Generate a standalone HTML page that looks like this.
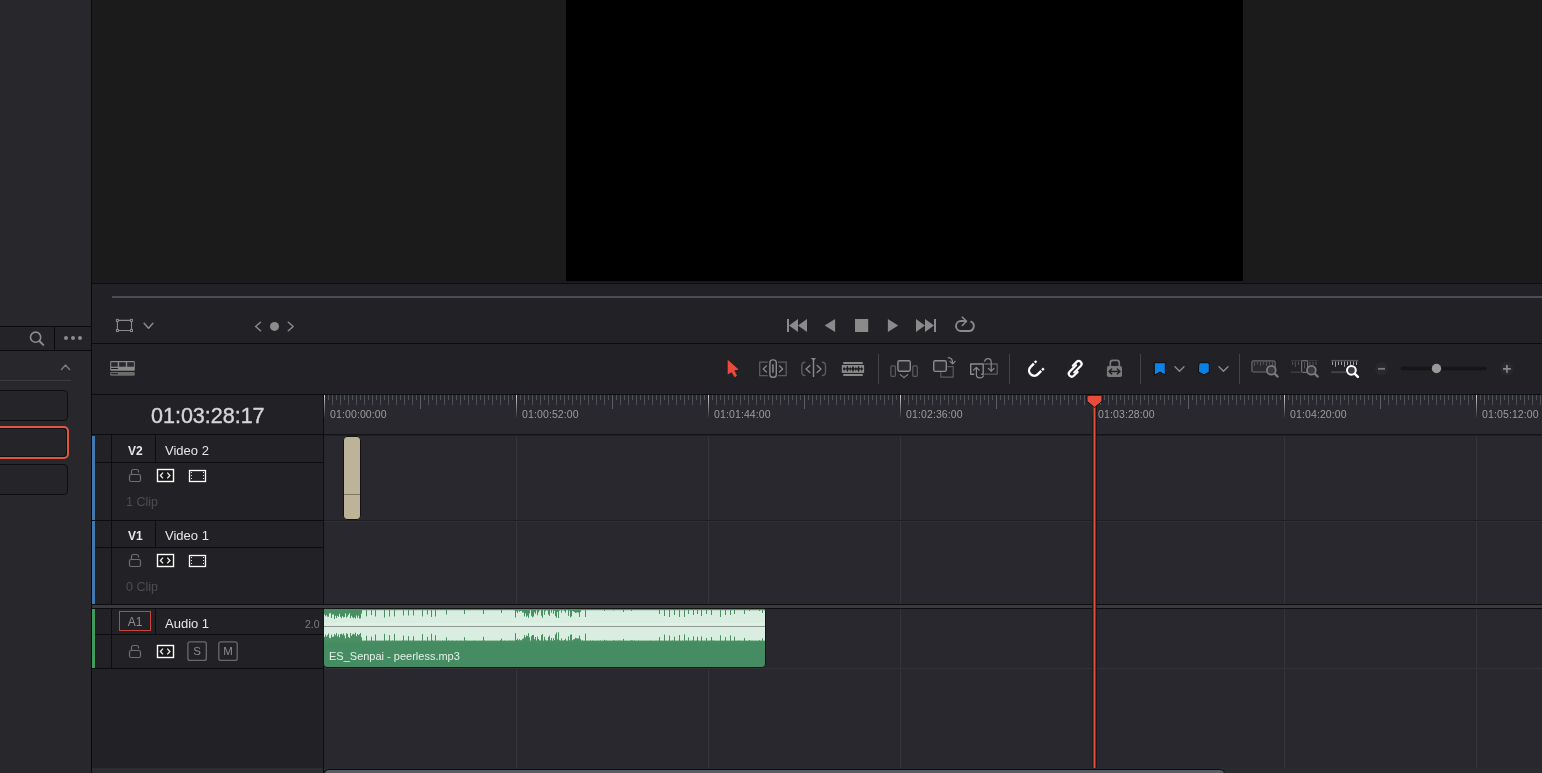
<!DOCTYPE html>
<html><head><meta charset="utf-8">
<style>
*{margin:0;padding:0;box-sizing:border-box}
html,body{width:1542px;height:773px;overflow:hidden;background:#28282e;font-family:"Liberation Sans",sans-serif}
body>div,body>svg{will-change:transform}
.a{position:absolute}
.tn{position:absolute;font-size:12px;font-weight:bold;color:#e6e6e6}
.tt{position:absolute;font-size:13px;color:#e6e6e6}
.tc{position:absolute;font-size:12.5px;color:#4e4e50}
.rl{font-family:"Liberation Sans",sans-serif;font-size:10.5px;letter-spacing:0.12px;fill:#9d9d9f}
</style></head><body>
<!-- left panel -->
<div class="a" style="left:0;top:0;width:91px;height:773px;background:#28272c"></div>
<div class="a" style="left:91px;top:0;width:1px;height:773px;background:#0b0b0c"></div>
<!-- viewer -->
<div class="a" style="left:92px;top:0;width:1450px;height:283px;background:#1b1b1b"></div>
<div class="a" style="left:566px;top:0;width:677px;height:281px;background:#000"></div>
<div class="a" style="left:92px;top:283px;width:1450px;height:1px;background:#0d0d0f"></div>
<!-- transport -->
<div class="a" style="left:92px;top:284px;width:1450px;height:59px;background:#222226"></div>
<div class="a" style="left:112px;top:296px;width:1430px;height:2px;background:#4a4c53"></div>
<div class="a" style="left:92px;top:343px;width:1450px;height:1px;background:#0d0d0f"></div>
<!-- timeline toolbar -->
<div class="a" style="left:92px;top:344px;width:1450px;height:50px;background:#222226"></div>
<div class="a" style="left:92px;top:394px;width:1450px;height:1px;background:#0d0d0f"></div>
<!-- timecode -->
<div class="a" style="left:92px;top:395px;width:231px;height:39px;background:#222226"></div>
<div class="a" style="left:92px;top:434px;width:231px;height:1px;background:#0d0d0f"></div>
<div class="a" style="left:151px;top:404px;font-size:21.5px;letter-spacing:0;-webkit-text-stroke:0.4px #d6d6d6;color:#d6d6d6;white-space:nowrap">01:03:28:17</div>
<!-- header panel -->
<div class="a" style="left:92px;top:435px;width:231px;height:338px;background:#222226"></div>
<div class="a" style="left:323px;top:395px;width:1px;height:378px;background:#0d0d0f"></div>

<!-- track headers -->
<div class="a" style="left:92px;top:436px;width:3px;height:84px;background:#4078b0"></div>
<div class="a" style="left:92px;top:521px;width:3px;height:83px;background:#4078b0"></div>
<div class="a" style="left:92px;top:609px;width:3px;height:59px;background:#3f9a5c"></div>
<div class="a" style="left:111px;top:435px;width:1px;height:233px;background:#0d0d0f"></div>
<div class="a" style="left:155px;top:435px;width:1px;height:27px;background:#0d0d0f"></div>
<div class="a" style="left:155px;top:520px;width:1px;height:27px;background:#0d0d0f"></div>
<div class="a" style="left:155px;top:608px;width:1px;height:26px;background:#0d0d0f"></div>
<div class="a" style="left:95px;top:462px;width:228px;height:1px;background:#0d0d0f"></div>
<div class="a" style="left:92px;top:520px;width:231px;height:1px;background:#0d0d0f"></div>
<div class="a" style="left:95px;top:547px;width:228px;height:1px;background:#0d0d0f"></div>
<div class="a" style="left:95px;top:634px;width:228px;height:1px;background:#0d0d0f"></div>
<div class="a" style="left:92px;top:668px;width:231px;height:1px;background:#0d0d0f"></div>
<div class="tn" style="left:128px;top:444px">V2</div>
<div class="tt" style="left:165px;top:443px">Video 2</div>
<div class="tc" style="left:126px;top:495px">1 Clip</div>
<div class="tn" style="left:128px;top:529px">V1</div>
<div class="tt" style="left:165px;top:528px">Video 1</div>
<div class="tc" style="left:126px;top:580px">0 Clip</div>
<div class="a" style="left:119px;top:611px;width:32px;height:20px;border:1px solid #c8443a;color:#8d8d8f;font-size:12px;text-align:center;line-height:20px">A1</div>
<div class="tt" style="left:165px;top:616px">Audio 1</div>
<div class="a" style="left:304.5px;top:618px;font-size:10.5px;color:#7b7b7d">2.0</div>

<!-- svg overlay for timeline -->
<svg class="a" style="left:0;top:0" width="1542" height="773">
<defs><linearGradient id="mg" x1="0" y1="0" x2="0" y2="1"><stop offset="0" stop-color="#cfcfd2"/><stop offset="1" stop-color="#cfcfd2" stop-opacity="0"/></linearGradient></defs>
<rect x="328" y="395" width="1" height="5" fill="#4b5056"/>
<rect x="332" y="395" width="1" height="10" fill="#4b5056"/>
<rect x="336" y="395" width="1" height="5" fill="#4b5056"/>
<rect x="340" y="395" width="1" height="10" fill="#4b5056"/>
<rect x="344" y="395" width="1" height="5" fill="#4b5056"/>
<rect x="348" y="395" width="1" height="10" fill="#4b5056"/>
<rect x="352" y="395" width="1" height="5" fill="#4b5056"/>
<rect x="356" y="395" width="1" height="10" fill="#4b5056"/>
<rect x="360" y="395" width="1" height="5" fill="#4b5056"/>
<rect x="364" y="395" width="1" height="10" fill="#4b5056"/>
<rect x="368" y="395" width="1" height="5" fill="#4b5056"/>
<rect x="372" y="395" width="1" height="10" fill="#4b5056"/>
<rect x="376" y="395" width="1" height="5" fill="#4b5056"/>
<rect x="380" y="395" width="1" height="10" fill="#4b5056"/>
<rect x="384" y="395" width="1" height="5" fill="#4b5056"/>
<rect x="388" y="395" width="1" height="10" fill="#4b5056"/>
<rect x="392" y="395" width="1" height="5" fill="#4b5056"/>
<rect x="396" y="395" width="1" height="10" fill="#4b5056"/>
<rect x="400" y="395" width="1" height="5" fill="#4b5056"/>
<rect x="404" y="395" width="1" height="10" fill="#4b5056"/>
<rect x="408" y="395" width="1" height="5" fill="#4b5056"/>
<rect x="412" y="395" width="1" height="10" fill="#4b5056"/>
<rect x="416" y="395" width="1" height="5" fill="#4b5056"/>
<rect x="420" y="395" width="1" height="14" fill="#5a5f66"/>
<rect x="424" y="395" width="1" height="5" fill="#4b5056"/>
<rect x="428" y="395" width="1" height="10" fill="#4b5056"/>
<rect x="432" y="395" width="1" height="5" fill="#4b5056"/>
<rect x="436" y="395" width="1" height="10" fill="#4b5056"/>
<rect x="440" y="395" width="1" height="5" fill="#4b5056"/>
<rect x="444" y="395" width="1" height="10" fill="#4b5056"/>
<rect x="448" y="395" width="1" height="5" fill="#4b5056"/>
<rect x="452" y="395" width="1" height="10" fill="#4b5056"/>
<rect x="456" y="395" width="1" height="5" fill="#4b5056"/>
<rect x="460" y="395" width="1" height="10" fill="#4b5056"/>
<rect x="464" y="395" width="1" height="5" fill="#4b5056"/>
<rect x="468" y="395" width="1" height="10" fill="#4b5056"/>
<rect x="472" y="395" width="1" height="5" fill="#4b5056"/>
<rect x="476" y="395" width="1" height="10" fill="#4b5056"/>
<rect x="480" y="395" width="1" height="5" fill="#4b5056"/>
<rect x="484" y="395" width="1" height="10" fill="#4b5056"/>
<rect x="488" y="395" width="1" height="5" fill="#4b5056"/>
<rect x="492" y="395" width="1" height="10" fill="#4b5056"/>
<rect x="496" y="395" width="1" height="5" fill="#4b5056"/>
<rect x="500" y="395" width="1" height="10" fill="#4b5056"/>
<rect x="504" y="395" width="1" height="5" fill="#4b5056"/>
<rect x="508" y="395" width="1" height="10" fill="#4b5056"/>
<rect x="512" y="395" width="1" height="5" fill="#4b5056"/>
<rect x="520" y="395" width="1" height="5" fill="#4b5056"/>
<rect x="524" y="395" width="1" height="10" fill="#4b5056"/>
<rect x="528" y="395" width="1" height="5" fill="#4b5056"/>
<rect x="532" y="395" width="1" height="10" fill="#4b5056"/>
<rect x="536" y="395" width="1" height="5" fill="#4b5056"/>
<rect x="540" y="395" width="1" height="10" fill="#4b5056"/>
<rect x="544" y="395" width="1" height="5" fill="#4b5056"/>
<rect x="548" y="395" width="1" height="10" fill="#4b5056"/>
<rect x="552" y="395" width="1" height="5" fill="#4b5056"/>
<rect x="556" y="395" width="1" height="10" fill="#4b5056"/>
<rect x="560" y="395" width="1" height="5" fill="#4b5056"/>
<rect x="564" y="395" width="1" height="10" fill="#4b5056"/>
<rect x="568" y="395" width="1" height="5" fill="#4b5056"/>
<rect x="572" y="395" width="1" height="10" fill="#4b5056"/>
<rect x="576" y="395" width="1" height="5" fill="#4b5056"/>
<rect x="580" y="395" width="1" height="10" fill="#4b5056"/>
<rect x="584" y="395" width="1" height="5" fill="#4b5056"/>
<rect x="588" y="395" width="1" height="10" fill="#4b5056"/>
<rect x="592" y="395" width="1" height="5" fill="#4b5056"/>
<rect x="596" y="395" width="1" height="10" fill="#4b5056"/>
<rect x="600" y="395" width="1" height="5" fill="#4b5056"/>
<rect x="604" y="395" width="1" height="10" fill="#4b5056"/>
<rect x="608" y="395" width="1" height="5" fill="#4b5056"/>
<rect x="612" y="395" width="1" height="14" fill="#5a5f66"/>
<rect x="616" y="395" width="1" height="5" fill="#4b5056"/>
<rect x="620" y="395" width="1" height="10" fill="#4b5056"/>
<rect x="624" y="395" width="1" height="5" fill="#4b5056"/>
<rect x="628" y="395" width="1" height="10" fill="#4b5056"/>
<rect x="632" y="395" width="1" height="5" fill="#4b5056"/>
<rect x="636" y="395" width="1" height="10" fill="#4b5056"/>
<rect x="640" y="395" width="1" height="5" fill="#4b5056"/>
<rect x="644" y="395" width="1" height="10" fill="#4b5056"/>
<rect x="648" y="395" width="1" height="5" fill="#4b5056"/>
<rect x="652" y="395" width="1" height="10" fill="#4b5056"/>
<rect x="656" y="395" width="1" height="5" fill="#4b5056"/>
<rect x="660" y="395" width="1" height="10" fill="#4b5056"/>
<rect x="664" y="395" width="1" height="5" fill="#4b5056"/>
<rect x="668" y="395" width="1" height="10" fill="#4b5056"/>
<rect x="672" y="395" width="1" height="5" fill="#4b5056"/>
<rect x="676" y="395" width="1" height="10" fill="#4b5056"/>
<rect x="680" y="395" width="1" height="5" fill="#4b5056"/>
<rect x="684" y="395" width="1" height="10" fill="#4b5056"/>
<rect x="688" y="395" width="1" height="5" fill="#4b5056"/>
<rect x="692" y="395" width="1" height="10" fill="#4b5056"/>
<rect x="696" y="395" width="1" height="5" fill="#4b5056"/>
<rect x="700" y="395" width="1" height="10" fill="#4b5056"/>
<rect x="704" y="395" width="1" height="5" fill="#4b5056"/>
<rect x="712" y="395" width="1" height="5" fill="#4b5056"/>
<rect x="716" y="395" width="1" height="10" fill="#4b5056"/>
<rect x="720" y="395" width="1" height="5" fill="#4b5056"/>
<rect x="724" y="395" width="1" height="10" fill="#4b5056"/>
<rect x="728" y="395" width="1" height="5" fill="#4b5056"/>
<rect x="732" y="395" width="1" height="10" fill="#4b5056"/>
<rect x="736" y="395" width="1" height="5" fill="#4b5056"/>
<rect x="740" y="395" width="1" height="10" fill="#4b5056"/>
<rect x="744" y="395" width="1" height="5" fill="#4b5056"/>
<rect x="748" y="395" width="1" height="10" fill="#4b5056"/>
<rect x="752" y="395" width="1" height="5" fill="#4b5056"/>
<rect x="756" y="395" width="1" height="10" fill="#4b5056"/>
<rect x="760" y="395" width="1" height="5" fill="#4b5056"/>
<rect x="764" y="395" width="1" height="10" fill="#4b5056"/>
<rect x="768" y="395" width="1" height="5" fill="#4b5056"/>
<rect x="772" y="395" width="1" height="10" fill="#4b5056"/>
<rect x="776" y="395" width="1" height="5" fill="#4b5056"/>
<rect x="780" y="395" width="1" height="10" fill="#4b5056"/>
<rect x="784" y="395" width="1" height="5" fill="#4b5056"/>
<rect x="788" y="395" width="1" height="10" fill="#4b5056"/>
<rect x="792" y="395" width="1" height="5" fill="#4b5056"/>
<rect x="796" y="395" width="1" height="10" fill="#4b5056"/>
<rect x="800" y="395" width="1" height="5" fill="#4b5056"/>
<rect x="804" y="395" width="1" height="14" fill="#5a5f66"/>
<rect x="808" y="395" width="1" height="5" fill="#4b5056"/>
<rect x="812" y="395" width="1" height="10" fill="#4b5056"/>
<rect x="816" y="395" width="1" height="5" fill="#4b5056"/>
<rect x="820" y="395" width="1" height="10" fill="#4b5056"/>
<rect x="824" y="395" width="1" height="5" fill="#4b5056"/>
<rect x="828" y="395" width="1" height="10" fill="#4b5056"/>
<rect x="832" y="395" width="1" height="5" fill="#4b5056"/>
<rect x="836" y="395" width="1" height="10" fill="#4b5056"/>
<rect x="840" y="395" width="1" height="5" fill="#4b5056"/>
<rect x="844" y="395" width="1" height="10" fill="#4b5056"/>
<rect x="848" y="395" width="1" height="5" fill="#4b5056"/>
<rect x="852" y="395" width="1" height="10" fill="#4b5056"/>
<rect x="856" y="395" width="1" height="5" fill="#4b5056"/>
<rect x="860" y="395" width="1" height="10" fill="#4b5056"/>
<rect x="864" y="395" width="1" height="5" fill="#4b5056"/>
<rect x="868" y="395" width="1" height="10" fill="#4b5056"/>
<rect x="872" y="395" width="1" height="5" fill="#4b5056"/>
<rect x="876" y="395" width="1" height="10" fill="#4b5056"/>
<rect x="880" y="395" width="1" height="5" fill="#4b5056"/>
<rect x="884" y="395" width="1" height="10" fill="#4b5056"/>
<rect x="888" y="395" width="1" height="5" fill="#4b5056"/>
<rect x="892" y="395" width="1" height="10" fill="#4b5056"/>
<rect x="896" y="395" width="1" height="5" fill="#4b5056"/>
<rect x="904" y="395" width="1" height="5" fill="#4b5056"/>
<rect x="908" y="395" width="1" height="10" fill="#4b5056"/>
<rect x="912" y="395" width="1" height="5" fill="#4b5056"/>
<rect x="916" y="395" width="1" height="10" fill="#4b5056"/>
<rect x="920" y="395" width="1" height="5" fill="#4b5056"/>
<rect x="924" y="395" width="1" height="10" fill="#4b5056"/>
<rect x="928" y="395" width="1" height="5" fill="#4b5056"/>
<rect x="932" y="395" width="1" height="10" fill="#4b5056"/>
<rect x="936" y="395" width="1" height="5" fill="#4b5056"/>
<rect x="940" y="395" width="1" height="10" fill="#4b5056"/>
<rect x="944" y="395" width="1" height="5" fill="#4b5056"/>
<rect x="948" y="395" width="1" height="10" fill="#4b5056"/>
<rect x="952" y="395" width="1" height="5" fill="#4b5056"/>
<rect x="956" y="395" width="1" height="10" fill="#4b5056"/>
<rect x="960" y="395" width="1" height="5" fill="#4b5056"/>
<rect x="964" y="395" width="1" height="10" fill="#4b5056"/>
<rect x="968" y="395" width="1" height="5" fill="#4b5056"/>
<rect x="972" y="395" width="1" height="10" fill="#4b5056"/>
<rect x="976" y="395" width="1" height="5" fill="#4b5056"/>
<rect x="980" y="395" width="1" height="10" fill="#4b5056"/>
<rect x="984" y="395" width="1" height="5" fill="#4b5056"/>
<rect x="988" y="395" width="1" height="10" fill="#4b5056"/>
<rect x="992" y="395" width="1" height="5" fill="#4b5056"/>
<rect x="996" y="395" width="1" height="14" fill="#5a5f66"/>
<rect x="1000" y="395" width="1" height="5" fill="#4b5056"/>
<rect x="1004" y="395" width="1" height="10" fill="#4b5056"/>
<rect x="1008" y="395" width="1" height="5" fill="#4b5056"/>
<rect x="1012" y="395" width="1" height="10" fill="#4b5056"/>
<rect x="1016" y="395" width="1" height="5" fill="#4b5056"/>
<rect x="1020" y="395" width="1" height="10" fill="#4b5056"/>
<rect x="1024" y="395" width="1" height="5" fill="#4b5056"/>
<rect x="1028" y="395" width="1" height="10" fill="#4b5056"/>
<rect x="1032" y="395" width="1" height="5" fill="#4b5056"/>
<rect x="1036" y="395" width="1" height="10" fill="#4b5056"/>
<rect x="1040" y="395" width="1" height="5" fill="#4b5056"/>
<rect x="1044" y="395" width="1" height="10" fill="#4b5056"/>
<rect x="1048" y="395" width="1" height="5" fill="#4b5056"/>
<rect x="1052" y="395" width="1" height="10" fill="#4b5056"/>
<rect x="1056" y="395" width="1" height="5" fill="#4b5056"/>
<rect x="1060" y="395" width="1" height="10" fill="#4b5056"/>
<rect x="1064" y="395" width="1" height="5" fill="#4b5056"/>
<rect x="1068" y="395" width="1" height="10" fill="#4b5056"/>
<rect x="1072" y="395" width="1" height="5" fill="#4b5056"/>
<rect x="1076" y="395" width="1" height="10" fill="#4b5056"/>
<rect x="1080" y="395" width="1" height="5" fill="#4b5056"/>
<rect x="1084" y="395" width="1" height="10" fill="#4b5056"/>
<rect x="1088" y="395" width="1" height="5" fill="#4b5056"/>
<rect x="1096" y="395" width="1" height="5" fill="#4b5056"/>
<rect x="1100" y="395" width="1" height="10" fill="#4b5056"/>
<rect x="1104" y="395" width="1" height="5" fill="#4b5056"/>
<rect x="1108" y="395" width="1" height="10" fill="#4b5056"/>
<rect x="1112" y="395" width="1" height="5" fill="#4b5056"/>
<rect x="1116" y="395" width="1" height="10" fill="#4b5056"/>
<rect x="1120" y="395" width="1" height="5" fill="#4b5056"/>
<rect x="1124" y="395" width="1" height="10" fill="#4b5056"/>
<rect x="1128" y="395" width="1" height="5" fill="#4b5056"/>
<rect x="1132" y="395" width="1" height="10" fill="#4b5056"/>
<rect x="1136" y="395" width="1" height="5" fill="#4b5056"/>
<rect x="1140" y="395" width="1" height="10" fill="#4b5056"/>
<rect x="1144" y="395" width="1" height="5" fill="#4b5056"/>
<rect x="1148" y="395" width="1" height="10" fill="#4b5056"/>
<rect x="1152" y="395" width="1" height="5" fill="#4b5056"/>
<rect x="1156" y="395" width="1" height="10" fill="#4b5056"/>
<rect x="1160" y="395" width="1" height="5" fill="#4b5056"/>
<rect x="1164" y="395" width="1" height="10" fill="#4b5056"/>
<rect x="1168" y="395" width="1" height="5" fill="#4b5056"/>
<rect x="1172" y="395" width="1" height="10" fill="#4b5056"/>
<rect x="1176" y="395" width="1" height="5" fill="#4b5056"/>
<rect x="1180" y="395" width="1" height="10" fill="#4b5056"/>
<rect x="1184" y="395" width="1" height="5" fill="#4b5056"/>
<rect x="1188" y="395" width="1" height="14" fill="#5a5f66"/>
<rect x="1192" y="395" width="1" height="5" fill="#4b5056"/>
<rect x="1196" y="395" width="1" height="10" fill="#4b5056"/>
<rect x="1200" y="395" width="1" height="5" fill="#4b5056"/>
<rect x="1204" y="395" width="1" height="10" fill="#4b5056"/>
<rect x="1208" y="395" width="1" height="5" fill="#4b5056"/>
<rect x="1212" y="395" width="1" height="10" fill="#4b5056"/>
<rect x="1216" y="395" width="1" height="5" fill="#4b5056"/>
<rect x="1220" y="395" width="1" height="10" fill="#4b5056"/>
<rect x="1224" y="395" width="1" height="5" fill="#4b5056"/>
<rect x="1228" y="395" width="1" height="10" fill="#4b5056"/>
<rect x="1232" y="395" width="1" height="5" fill="#4b5056"/>
<rect x="1236" y="395" width="1" height="10" fill="#4b5056"/>
<rect x="1240" y="395" width="1" height="5" fill="#4b5056"/>
<rect x="1244" y="395" width="1" height="10" fill="#4b5056"/>
<rect x="1248" y="395" width="1" height="5" fill="#4b5056"/>
<rect x="1252" y="395" width="1" height="10" fill="#4b5056"/>
<rect x="1256" y="395" width="1" height="5" fill="#4b5056"/>
<rect x="1260" y="395" width="1" height="10" fill="#4b5056"/>
<rect x="1264" y="395" width="1" height="5" fill="#4b5056"/>
<rect x="1268" y="395" width="1" height="10" fill="#4b5056"/>
<rect x="1272" y="395" width="1" height="5" fill="#4b5056"/>
<rect x="1276" y="395" width="1" height="10" fill="#4b5056"/>
<rect x="1280" y="395" width="1" height="5" fill="#4b5056"/>
<rect x="1288" y="395" width="1" height="5" fill="#4b5056"/>
<rect x="1292" y="395" width="1" height="10" fill="#4b5056"/>
<rect x="1296" y="395" width="1" height="5" fill="#4b5056"/>
<rect x="1300" y="395" width="1" height="10" fill="#4b5056"/>
<rect x="1304" y="395" width="1" height="5" fill="#4b5056"/>
<rect x="1308" y="395" width="1" height="10" fill="#4b5056"/>
<rect x="1312" y="395" width="1" height="5" fill="#4b5056"/>
<rect x="1316" y="395" width="1" height="10" fill="#4b5056"/>
<rect x="1320" y="395" width="1" height="5" fill="#4b5056"/>
<rect x="1324" y="395" width="1" height="10" fill="#4b5056"/>
<rect x="1328" y="395" width="1" height="5" fill="#4b5056"/>
<rect x="1332" y="395" width="1" height="10" fill="#4b5056"/>
<rect x="1336" y="395" width="1" height="5" fill="#4b5056"/>
<rect x="1340" y="395" width="1" height="10" fill="#4b5056"/>
<rect x="1344" y="395" width="1" height="5" fill="#4b5056"/>
<rect x="1348" y="395" width="1" height="10" fill="#4b5056"/>
<rect x="1352" y="395" width="1" height="5" fill="#4b5056"/>
<rect x="1356" y="395" width="1" height="10" fill="#4b5056"/>
<rect x="1360" y="395" width="1" height="5" fill="#4b5056"/>
<rect x="1364" y="395" width="1" height="10" fill="#4b5056"/>
<rect x="1368" y="395" width="1" height="5" fill="#4b5056"/>
<rect x="1372" y="395" width="1" height="10" fill="#4b5056"/>
<rect x="1376" y="395" width="1" height="5" fill="#4b5056"/>
<rect x="1380" y="395" width="1" height="14" fill="#5a5f66"/>
<rect x="1384" y="395" width="1" height="5" fill="#4b5056"/>
<rect x="1388" y="395" width="1" height="10" fill="#4b5056"/>
<rect x="1392" y="395" width="1" height="5" fill="#4b5056"/>
<rect x="1396" y="395" width="1" height="10" fill="#4b5056"/>
<rect x="1400" y="395" width="1" height="5" fill="#4b5056"/>
<rect x="1404" y="395" width="1" height="10" fill="#4b5056"/>
<rect x="1408" y="395" width="1" height="5" fill="#4b5056"/>
<rect x="1412" y="395" width="1" height="10" fill="#4b5056"/>
<rect x="1416" y="395" width="1" height="5" fill="#4b5056"/>
<rect x="1420" y="395" width="1" height="10" fill="#4b5056"/>
<rect x="1424" y="395" width="1" height="5" fill="#4b5056"/>
<rect x="1428" y="395" width="1" height="10" fill="#4b5056"/>
<rect x="1432" y="395" width="1" height="5" fill="#4b5056"/>
<rect x="1436" y="395" width="1" height="10" fill="#4b5056"/>
<rect x="1440" y="395" width="1" height="5" fill="#4b5056"/>
<rect x="1444" y="395" width="1" height="10" fill="#4b5056"/>
<rect x="1448" y="395" width="1" height="5" fill="#4b5056"/>
<rect x="1452" y="395" width="1" height="10" fill="#4b5056"/>
<rect x="1456" y="395" width="1" height="5" fill="#4b5056"/>
<rect x="1460" y="395" width="1" height="10" fill="#4b5056"/>
<rect x="1464" y="395" width="1" height="5" fill="#4b5056"/>
<rect x="1468" y="395" width="1" height="10" fill="#4b5056"/>
<rect x="1472" y="395" width="1" height="5" fill="#4b5056"/>
<rect x="1480" y="395" width="1" height="5" fill="#4b5056"/>
<rect x="1484" y="395" width="1" height="10" fill="#4b5056"/>
<rect x="1488" y="395" width="1" height="5" fill="#4b5056"/>
<rect x="1492" y="395" width="1" height="10" fill="#4b5056"/>
<rect x="1496" y="395" width="1" height="5" fill="#4b5056"/>
<rect x="1500" y="395" width="1" height="10" fill="#4b5056"/>
<rect x="1504" y="395" width="1" height="5" fill="#4b5056"/>
<rect x="1508" y="395" width="1" height="10" fill="#4b5056"/>
<rect x="1512" y="395" width="1" height="5" fill="#4b5056"/>
<rect x="1516" y="395" width="1" height="10" fill="#4b5056"/>
<rect x="1520" y="395" width="1" height="5" fill="#4b5056"/>
<rect x="1524" y="395" width="1" height="10" fill="#4b5056"/>
<rect x="1528" y="395" width="1" height="5" fill="#4b5056"/>
<rect x="1532" y="395" width="1" height="10" fill="#4b5056"/>
<rect x="1536" y="395" width="1" height="5" fill="#4b5056"/>
<rect x="1540" y="395" width="1" height="10" fill="#4b5056"/>
<rect x="324" y="395" width="1" height="24" fill="url(#mg)"/>
<text x="330" y="418" class="rl">01:00:00:00</text>
<rect x="516" y="395" width="1" height="24" fill="url(#mg)"/>
<text x="522" y="418" class="rl">01:00:52:00</text>
<rect x="708" y="395" width="1" height="24" fill="url(#mg)"/>
<text x="714" y="418" class="rl">01:01:44:00</text>
<rect x="900" y="395" width="1" height="24" fill="url(#mg)"/>
<text x="906" y="418" class="rl">01:02:36:00</text>
<rect x="1092" y="395" width="1" height="24" fill="url(#mg)"/>
<text x="1098" y="418" class="rl">01:03:28:00</text>
<rect x="1284" y="395" width="1" height="24" fill="url(#mg)"/>
<text x="1290" y="418" class="rl">01:04:20:00</text>
<rect x="1476" y="395" width="1" height="24" fill="url(#mg)"/>
<text x="1482" y="418" class="rl">01:05:12:00</text>
<rect x="516" y="435" width="1" height="334" fill="#34343a"/>
<rect x="708" y="435" width="1" height="334" fill="#34343a"/>
<rect x="900" y="435" width="1" height="334" fill="#34343a"/>
<rect x="1092" y="435" width="1" height="334" fill="#34343a"/>
<rect x="1284" y="435" width="1" height="334" fill="#34343a"/>
<rect x="1476" y="435" width="1" height="334" fill="#34343a"/>
</svg>
<!-- canvas details -->
<div class="a" style="left:92px;top:604px;width:1450px;height:1px;background:#0d0d0f"></div>
<div class="a" style="left:92px;top:605px;width:1450px;height:3px;background:#3a3a3d"></div>
<div class="a" style="left:92px;top:608px;width:1450px;height:1px;background:#0d0d0f"></div>

<div class="a" style="left:324px;top:434px;width:1218px;height:1px;background:#141417"></div>
<div class="a" style="left:324px;top:435px;width:1218px;height:1px;background:#1f1f23"></div>
<div class="a" style="left:324px;top:520px;width:1218px;height:1px;background:#1f1f23"></div>
<div class="a" style="left:324px;top:521px;width:1218px;height:1px;background:#2f2f35"></div>
<div class="a" style="left:324px;top:668px;width:1218px;height:1px;background:#323238"></div>
<!-- bottom strip -->
<div class="a" style="left:92px;top:768px;width:231px;height:5px;background:#2c2d31"></div>
<div class="a" style="left:324px;top:768px;width:1218px;height:5px;background:#2a2b2f"></div>
<div class="a" style="left:324px;top:769px;width:901px;height:6px;background:#5a5d63;border:1px solid #0c0c0e;border-radius:5px 5px 0 0"></div>
<!-- V2 clip -->
<div class="a" style="left:343px;top:436px;width:18px;height:84px;background:#bdb399;border:1px solid #141416;border-radius:4px"></div>
<div class="a" style="left:344px;top:494px;width:16px;height:1px;background:#7d7764"></div>
<!-- audio clip -->
<div class="a" style="left:323px;top:608px;width:443px;height:60px;background:#468c62;border:1px solid #141416;border-radius:4px;overflow:hidden">
  <div class="a" style="left:0;top:0;width:441px;height:33px;background:#d9ede1"></div>
  <div class="a" style="left:0;top:13.5px;width:441px;height:2px;background:#e1f1e7"></div>
  <div class="a" style="left:0;top:17px;width:441px;height:1px;background:#8f9b93"></div>
  <div class="a" style="left:5px;top:41px;font-size:11px;color:#e4efe7;white-space:nowrap">ES_Senpai - peerless.mp3</div>
</div>
<svg class="a" style="left:0;top:0" width="1542" height="773">
<rect x="324" y="609" width="441" height="1.2" fill="#4a8f63"/>
<rect x="324" y="640.6" width="441" height="1.6" fill="#4a8f63"/>
<rect x="324" y="609" width="1" height="5.4" fill="#4a8f63"/>
<rect x="324" y="637.0" width="1" height="5.0" fill="#4a8f63"/>
<rect x="325" y="609" width="1" height="7.3" fill="#4a8f63"/>
<rect x="325" y="634.6" width="1" height="7.4" fill="#4a8f63"/>
<rect x="326" y="609" width="1" height="6.2" fill="#4a8f63"/>
<rect x="326" y="636.6" width="1" height="5.4" fill="#4a8f63"/>
<rect x="327" y="609" width="1" height="7.6" fill="#4a8f63"/>
<rect x="327" y="635.2" width="1" height="6.8" fill="#4a8f63"/>
<rect x="328" y="609" width="1" height="7.8" fill="#4a8f63"/>
<rect x="328" y="633.5" width="1" height="8.5" fill="#4a8f63"/>
<rect x="329" y="609" width="1" height="4.4" fill="#4a8f63"/>
<rect x="329" y="637.8" width="1" height="4.2" fill="#4a8f63"/>
<rect x="330" y="609" width="1" height="4.1" fill="#4a8f63"/>
<rect x="330" y="638.1" width="1" height="3.9" fill="#4a8f63"/>
<rect x="331" y="609" width="1" height="9.0" fill="#4a8f63"/>
<rect x="331" y="634.7" width="1" height="7.3" fill="#4a8f63"/>
<rect x="332" y="609" width="1" height="5.6" fill="#4a8f63"/>
<rect x="332" y="636.9" width="1" height="5.1" fill="#4a8f63"/>
<rect x="333" y="609" width="1" height="5.4" fill="#4a8f63"/>
<rect x="333" y="636.7" width="1" height="5.3" fill="#4a8f63"/>
<rect x="334" y="609" width="1" height="10.0" fill="#4a8f63"/>
<rect x="334" y="634.0" width="1" height="8.0" fill="#4a8f63"/>
<rect x="335" y="609" width="1" height="6.8" fill="#4a8f63"/>
<rect x="335" y="635.3" width="1" height="6.7" fill="#4a8f63"/>
<rect x="336" y="609" width="1" height="9.0" fill="#4a8f63"/>
<rect x="336" y="633.1" width="1" height="8.9" fill="#4a8f63"/>
<rect x="337" y="609" width="1" height="6.9" fill="#4a8f63"/>
<rect x="337" y="636.4" width="1" height="5.6" fill="#4a8f63"/>
<rect x="338" y="609" width="1" height="7.8" fill="#4a8f63"/>
<rect x="338" y="634.3" width="1" height="7.7" fill="#4a8f63"/>
<rect x="339" y="609" width="1" height="4.9" fill="#4a8f63"/>
<rect x="339" y="637.4" width="1" height="4.6" fill="#4a8f63"/>
<rect x="340" y="609" width="1" height="7.8" fill="#4a8f63"/>
<rect x="340" y="634.2" width="1" height="7.8" fill="#4a8f63"/>
<rect x="341" y="609" width="1" height="9.2" fill="#4a8f63"/>
<rect x="341" y="633.7" width="1" height="8.3" fill="#4a8f63"/>
<rect x="342" y="609" width="1" height="7.1" fill="#4a8f63"/>
<rect x="342" y="634.8" width="1" height="7.2" fill="#4a8f63"/>
<rect x="343" y="609" width="1" height="8.4" fill="#4a8f63"/>
<rect x="343" y="633.4" width="1" height="8.6" fill="#4a8f63"/>
<rect x="344" y="609" width="1" height="8.0" fill="#4a8f63"/>
<rect x="344" y="635.5" width="1" height="6.5" fill="#4a8f63"/>
<rect x="345" y="609" width="1" height="4.4" fill="#4a8f63"/>
<rect x="345" y="638.4" width="1" height="3.6" fill="#4a8f63"/>
<rect x="346" y="609" width="1" height="8.5" fill="#4a8f63"/>
<rect x="346" y="633.4" width="1" height="8.6" fill="#4a8f63"/>
<rect x="347" y="609" width="1" height="7.5" fill="#4a8f63"/>
<rect x="347" y="633.8" width="1" height="8.2" fill="#4a8f63"/>
<rect x="348" y="609" width="1" height="5.8" fill="#4a8f63"/>
<rect x="348" y="636.9" width="1" height="5.1" fill="#4a8f63"/>
<rect x="349" y="609" width="1" height="4.2" fill="#4a8f63"/>
<rect x="349" y="638.1" width="1" height="3.9" fill="#4a8f63"/>
<rect x="350" y="609" width="1" height="9.2" fill="#4a8f63"/>
<rect x="350" y="633.0" width="1" height="9.0" fill="#4a8f63"/>
<rect x="351" y="609" width="1" height="6.8" fill="#4a8f63"/>
<rect x="351" y="635.9" width="1" height="6.1" fill="#4a8f63"/>
<rect x="352" y="609" width="1" height="8.3" fill="#4a8f63"/>
<rect x="352" y="634.4" width="1" height="7.6" fill="#4a8f63"/>
<rect x="353" y="609" width="1" height="9.3" fill="#4a8f63"/>
<rect x="353" y="633.7" width="1" height="8.3" fill="#4a8f63"/>
<rect x="354" y="609" width="1" height="8.3" fill="#4a8f63"/>
<rect x="354" y="634.5" width="1" height="7.5" fill="#4a8f63"/>
<rect x="355" y="609" width="1" height="9.5" fill="#4a8f63"/>
<rect x="355" y="632.7" width="1" height="9.3" fill="#4a8f63"/>
<rect x="356" y="609" width="1" height="6.4" fill="#4a8f63"/>
<rect x="356" y="636.3" width="1" height="5.7" fill="#4a8f63"/>
<rect x="357" y="609" width="1" height="8.8" fill="#4a8f63"/>
<rect x="357" y="634.0" width="1" height="8.0" fill="#4a8f63"/>
<rect x="358" y="609" width="1" height="6.7" fill="#4a8f63"/>
<rect x="358" y="635.1" width="1" height="6.9" fill="#4a8f63"/>
<rect x="359" y="609" width="1" height="9.6" fill="#4a8f63"/>
<rect x="359" y="634.2" width="1" height="7.8" fill="#4a8f63"/>
<rect x="360" y="609" width="1" height="9.3" fill="#4a8f63"/>
<rect x="360" y="633.0" width="1" height="9.0" fill="#4a8f63"/>
<rect x="361" y="609" width="1" height="4.6" fill="#4a8f63"/>
<rect x="361" y="637.3" width="1" height="4.7" fill="#4a8f63"/>
<rect x="513" y="609" width="1" height="1.1" fill="#4a8f63"/>
<rect x="513" y="641.0" width="1" height="1.0" fill="#4a8f63"/>
<rect x="514" y="609" width="1" height="1.3" fill="#4a8f63"/>
<rect x="514" y="640.9" width="1" height="1.1" fill="#4a8f63"/>
<rect x="515" y="609" width="1" height="8.4" fill="#4a8f63"/>
<rect x="515" y="633.2" width="1" height="8.8" fill="#4a8f63"/>
<rect x="516" y="609" width="1" height="2.3" fill="#4a8f63"/>
<rect x="516" y="640.0" width="1" height="2.0" fill="#4a8f63"/>
<rect x="517" y="609" width="1" height="3.9" fill="#4a8f63"/>
<rect x="517" y="638.7" width="1" height="3.3" fill="#4a8f63"/>
<rect x="518" y="609" width="1" height="1.6" fill="#4a8f63"/>
<rect x="518" y="640.5" width="1" height="1.5" fill="#4a8f63"/>
<rect x="519" y="609" width="1" height="2.8" fill="#4a8f63"/>
<rect x="519" y="639.2" width="1" height="2.8" fill="#4a8f63"/>
<rect x="520" y="609" width="1" height="2.0" fill="#4a8f63"/>
<rect x="520" y="640.4" width="1" height="1.6" fill="#4a8f63"/>
<rect x="521" y="609" width="1" height="1.8" fill="#4a8f63"/>
<rect x="521" y="640.4" width="1" height="1.6" fill="#4a8f63"/>
<rect x="522" y="609" width="1" height="3.5" fill="#4a8f63"/>
<rect x="522" y="638.9" width="1" height="3.1" fill="#4a8f63"/>
<rect x="523" y="609" width="1" height="3.5" fill="#4a8f63"/>
<rect x="523" y="638.4" width="1" height="3.6" fill="#4a8f63"/>
<rect x="524" y="609" width="1" height="7.4" fill="#4a8f63"/>
<rect x="524" y="635.1" width="1" height="6.9" fill="#4a8f63"/>
<rect x="525" y="609" width="1" height="4.4" fill="#4a8f63"/>
<rect x="525" y="637.3" width="1" height="4.7" fill="#4a8f63"/>
<rect x="526" y="609" width="1" height="7.8" fill="#4a8f63"/>
<rect x="526" y="635.4" width="1" height="6.6" fill="#4a8f63"/>
<rect x="527" y="609" width="1" height="6.7" fill="#4a8f63"/>
<rect x="527" y="636.0" width="1" height="6.0" fill="#4a8f63"/>
<rect x="528" y="609" width="1" height="8.8" fill="#4a8f63"/>
<rect x="528" y="633.2" width="1" height="8.8" fill="#4a8f63"/>
<rect x="529" y="609" width="1" height="4.3" fill="#4a8f63"/>
<rect x="529" y="637.4" width="1" height="4.6" fill="#4a8f63"/>
<rect x="530" y="609" width="1" height="1.1" fill="#4a8f63"/>
<rect x="530" y="640.9" width="1" height="1.1" fill="#4a8f63"/>
<rect x="531" y="609" width="1" height="6.8" fill="#4a8f63"/>
<rect x="531" y="636.1" width="1" height="5.9" fill="#4a8f63"/>
<rect x="532" y="609" width="1" height="8.4" fill="#4a8f63"/>
<rect x="532" y="635.0" width="1" height="7.0" fill="#4a8f63"/>
<rect x="533" y="609" width="1" height="7.4" fill="#4a8f63"/>
<rect x="533" y="634.9" width="1" height="7.1" fill="#4a8f63"/>
<rect x="534" y="609" width="1" height="3.3" fill="#4a8f63"/>
<rect x="534" y="639.2" width="1" height="2.8" fill="#4a8f63"/>
<rect x="535" y="609" width="1" height="4.8" fill="#4a8f63"/>
<rect x="535" y="637.0" width="1" height="5.0" fill="#4a8f63"/>
<rect x="536" y="609" width="1" height="1.3" fill="#4a8f63"/>
<rect x="536" y="640.7" width="1" height="1.3" fill="#4a8f63"/>
<rect x="537" y="609" width="1" height="6.3" fill="#4a8f63"/>
<rect x="537" y="636.6" width="1" height="5.4" fill="#4a8f63"/>
<rect x="538" y="609" width="1" height="3.4" fill="#4a8f63"/>
<rect x="538" y="639.0" width="1" height="3.0" fill="#4a8f63"/>
<rect x="539" y="609" width="1" height="1.5" fill="#4a8f63"/>
<rect x="539" y="640.4" width="1" height="1.6" fill="#4a8f63"/>
<rect x="540" y="609" width="1" height="1.0" fill="#4a8f63"/>
<rect x="540" y="641.0" width="1" height="1.0" fill="#4a8f63"/>
<rect x="541" y="609" width="1" height="6.7" fill="#4a8f63"/>
<rect x="541" y="635.1" width="1" height="6.9" fill="#4a8f63"/>
<rect x="542" y="609" width="1" height="8.8" fill="#4a8f63"/>
<rect x="542" y="634.0" width="1" height="8.0" fill="#4a8f63"/>
<rect x="543" y="609" width="1" height="1.0" fill="#4a8f63"/>
<rect x="543" y="641.1" width="1" height="0.9" fill="#4a8f63"/>
<rect x="544" y="609" width="1" height="5.9" fill="#4a8f63"/>
<rect x="544" y="636.8" width="1" height="5.2" fill="#4a8f63"/>
<rect x="545" y="609" width="1" height="2.1" fill="#4a8f63"/>
<rect x="545" y="639.8" width="1" height="2.2" fill="#4a8f63"/>
<rect x="546" y="609" width="1" height="1.1" fill="#4a8f63"/>
<rect x="546" y="641.0" width="1" height="1.0" fill="#4a8f63"/>
<rect x="547" y="609" width="1" height="1.5" fill="#4a8f63"/>
<rect x="547" y="640.6" width="1" height="1.4" fill="#4a8f63"/>
<rect x="548" y="609" width="1" height="5.5" fill="#4a8f63"/>
<rect x="548" y="636.9" width="1" height="5.1" fill="#4a8f63"/>
<rect x="549" y="609" width="1" height="6.9" fill="#4a8f63"/>
<rect x="549" y="635.6" width="1" height="6.4" fill="#4a8f63"/>
<rect x="550" y="609" width="1" height="1.0" fill="#4a8f63"/>
<rect x="550" y="641.1" width="1" height="0.9" fill="#4a8f63"/>
<rect x="551" y="609" width="1" height="3.7" fill="#4a8f63"/>
<rect x="551" y="638.0" width="1" height="4.0" fill="#4a8f63"/>
<rect x="552" y="609" width="1" height="1.0" fill="#4a8f63"/>
<rect x="552" y="641.1" width="1" height="0.9" fill="#4a8f63"/>
<rect x="553" y="609" width="1" height="4.9" fill="#4a8f63"/>
<rect x="553" y="638.1" width="1" height="3.9" fill="#4a8f63"/>
<rect x="554" y="609" width="1" height="1.7" fill="#4a8f63"/>
<rect x="554" y="640.2" width="1" height="1.8" fill="#4a8f63"/>
<rect x="555" y="609" width="1" height="7.1" fill="#4a8f63"/>
<rect x="555" y="634.5" width="1" height="7.5" fill="#4a8f63"/>
<rect x="556" y="609" width="1" height="8.7" fill="#4a8f63"/>
<rect x="556" y="632.5" width="1" height="9.5" fill="#4a8f63"/>
<rect x="557" y="609" width="1" height="2.8" fill="#4a8f63"/>
<rect x="557" y="639.4" width="1" height="2.6" fill="#4a8f63"/>
<rect x="558" y="609" width="1" height="9.0" fill="#4a8f63"/>
<rect x="558" y="632.3" width="1" height="9.7" fill="#4a8f63"/>
<rect x="559" y="609" width="1" height="1.6" fill="#4a8f63"/>
<rect x="559" y="640.3" width="1" height="1.7" fill="#4a8f63"/>
<rect x="560" y="609" width="1" height="1.0" fill="#4a8f63"/>
<rect x="560" y="641.1" width="1" height="0.9" fill="#4a8f63"/>
<rect x="561" y="609" width="1" height="3.6" fill="#4a8f63"/>
<rect x="561" y="638.3" width="1" height="3.7" fill="#4a8f63"/>
<rect x="562" y="609" width="1" height="1.0" fill="#4a8f63"/>
<rect x="562" y="640.9" width="1" height="1.1" fill="#4a8f63"/>
<rect x="563" y="609" width="1" height="1.2" fill="#4a8f63"/>
<rect x="563" y="640.8" width="1" height="1.2" fill="#4a8f63"/>
<rect x="564" y="609" width="1" height="2.1" fill="#4a8f63"/>
<rect x="564" y="640.0" width="1" height="2.0" fill="#4a8f63"/>
<rect x="565" y="609" width="1" height="3.7" fill="#4a8f63"/>
<rect x="565" y="638.7" width="1" height="3.3" fill="#4a8f63"/>
<rect x="566" y="609" width="1" height="1.1" fill="#4a8f63"/>
<rect x="566" y="641.0" width="1" height="1.0" fill="#4a8f63"/>
<rect x="567" y="609" width="1" height="1.0" fill="#4a8f63"/>
<rect x="567" y="641.1" width="1" height="0.9" fill="#4a8f63"/>
<rect x="568" y="609" width="1" height="6.9" fill="#4a8f63"/>
<rect x="568" y="636.4" width="1" height="5.6" fill="#4a8f63"/>
<rect x="569" y="609" width="1" height="1.6" fill="#4a8f63"/>
<rect x="569" y="640.4" width="1" height="1.6" fill="#4a8f63"/>
<rect x="570" y="609" width="1" height="8.3" fill="#4a8f63"/>
<rect x="570" y="634.7" width="1" height="7.3" fill="#4a8f63"/>
<rect x="571" y="609" width="1" height="7.3" fill="#4a8f63"/>
<rect x="571" y="634.4" width="1" height="7.6" fill="#4a8f63"/>
<rect x="572" y="609" width="1" height="1.9" fill="#4a8f63"/>
<rect x="572" y="640.4" width="1" height="1.6" fill="#4a8f63"/>
<rect x="573" y="609" width="1" height="2.5" fill="#4a8f63"/>
<rect x="573" y="639.4" width="1" height="2.6" fill="#4a8f63"/>
<rect x="574" y="609" width="1" height="2.9" fill="#4a8f63"/>
<rect x="574" y="639.1" width="1" height="2.9" fill="#4a8f63"/>
<rect x="575" y="609" width="1" height="4.0" fill="#4a8f63"/>
<rect x="575" y="637.7" width="1" height="4.3" fill="#4a8f63"/>
<rect x="576" y="609" width="1" height="3.6" fill="#4a8f63"/>
<rect x="576" y="638.2" width="1" height="3.8" fill="#4a8f63"/>
<rect x="577" y="609" width="1" height="3.2" fill="#4a8f63"/>
<rect x="577" y="638.5" width="1" height="3.5" fill="#4a8f63"/>
<rect x="578" y="609" width="1" height="3.8" fill="#4a8f63"/>
<rect x="578" y="638.3" width="1" height="3.7" fill="#4a8f63"/>
<rect x="579" y="609" width="1" height="8.0" fill="#4a8f63"/>
<rect x="579" y="635.6" width="1" height="6.4" fill="#4a8f63"/>
<rect x="580" y="609" width="1" height="2.8" fill="#4a8f63"/>
<rect x="580" y="639.1" width="1" height="2.9" fill="#4a8f63"/>
<rect x="366" y="609" width="1" height="7.3" fill="#4a8f63"/>
<rect x="366" y="635.8" width="1" height="6.2" fill="#4a8f63"/>
<rect x="371" y="609" width="1" height="6.0" fill="#4a8f63"/>
<rect x="371" y="636.7" width="1" height="5.3" fill="#4a8f63"/>
<rect x="375" y="609" width="1" height="7.5" fill="#4a8f63"/>
<rect x="375" y="634.5" width="1" height="7.5" fill="#4a8f63"/>
<rect x="384" y="609" width="1" height="8.5" fill="#4a8f63"/>
<rect x="384" y="633.9" width="1" height="8.1" fill="#4a8f63"/>
<rect x="389" y="609" width="1" height="7.5" fill="#4a8f63"/>
<rect x="389" y="635.1" width="1" height="6.9" fill="#4a8f63"/>
<rect x="394" y="609" width="1" height="7.5" fill="#4a8f63"/>
<rect x="394" y="633.9" width="1" height="8.1" fill="#4a8f63"/>
<rect x="403" y="609" width="1" height="6.5" fill="#4a8f63"/>
<rect x="403" y="635.6" width="1" height="6.4" fill="#4a8f63"/>
<rect x="408" y="609" width="1" height="6.5" fill="#4a8f63"/>
<rect x="408" y="636.1" width="1" height="5.9" fill="#4a8f63"/>
<rect x="413" y="609" width="1" height="6.5" fill="#4a8f63"/>
<rect x="413" y="636.3" width="1" height="5.7" fill="#4a8f63"/>
<rect x="422" y="609" width="1" height="7.5" fill="#4a8f63"/>
<rect x="422" y="634.1" width="1" height="7.9" fill="#4a8f63"/>
<rect x="427" y="609" width="1" height="5.5" fill="#4a8f63"/>
<rect x="427" y="636.8" width="1" height="5.2" fill="#4a8f63"/>
<rect x="431" y="609" width="1" height="8.0" fill="#4a8f63"/>
<rect x="431" y="633.7" width="1" height="8.3" fill="#4a8f63"/>
<rect x="435" y="609" width="1" height="7.5" fill="#4a8f63"/>
<rect x="435" y="635.2" width="1" height="6.8" fill="#4a8f63"/>
<rect x="446" y="609" width="1" height="5.5" fill="#4a8f63"/>
<rect x="446" y="637.3" width="1" height="4.7" fill="#4a8f63"/>
<rect x="464" y="609" width="1" height="5.0" fill="#4a8f63"/>
<rect x="464" y="637.2" width="1" height="4.8" fill="#4a8f63"/>
<rect x="483" y="609" width="1" height="5.0" fill="#4a8f63"/>
<rect x="483" y="636.8" width="1" height="5.2" fill="#4a8f63"/>
<rect x="501" y="609" width="1" height="4.0" fill="#4a8f63"/>
<rect x="501" y="638.6" width="1" height="3.4" fill="#4a8f63"/>
<rect x="585" y="609" width="1" height="8.0" fill="#4a8f63"/>
<rect x="585" y="633.7" width="1" height="8.3" fill="#4a8f63"/>
<rect x="604" y="609" width="1" height="2.0" fill="#4a8f63"/>
<rect x="604" y="639.8" width="1" height="2.2" fill="#4a8f63"/>
<rect x="613" y="609" width="1" height="1.5" fill="#4a8f63"/>
<rect x="613" y="640.4" width="1" height="1.6" fill="#4a8f63"/>
<rect x="623" y="609" width="1" height="3.0" fill="#4a8f63"/>
<rect x="623" y="638.9" width="1" height="3.1" fill="#4a8f63"/>
<rect x="631" y="609" width="1" height="2.0" fill="#4a8f63"/>
<rect x="631" y="640.4" width="1" height="1.6" fill="#4a8f63"/>
<rect x="659" y="609" width="1" height="5.0" fill="#4a8f63"/>
<rect x="659" y="637.1" width="1" height="4.9" fill="#4a8f63"/>
<rect x="664" y="609" width="1" height="7.0" fill="#4a8f63"/>
<rect x="664" y="634.6" width="1" height="7.4" fill="#4a8f63"/>
<rect x="669" y="609" width="1" height="8.0" fill="#4a8f63"/>
<rect x="669" y="635.5" width="1" height="6.5" fill="#4a8f63"/>
<rect x="674" y="609" width="1" height="6.0" fill="#4a8f63"/>
<rect x="674" y="636.7" width="1" height="5.3" fill="#4a8f63"/>
<rect x="679" y="609" width="1" height="8.0" fill="#4a8f63"/>
<rect x="679" y="635.0" width="1" height="7.0" fill="#4a8f63"/>
<rect x="684" y="609" width="1" height="8.0" fill="#4a8f63"/>
<rect x="684" y="634.3" width="1" height="7.7" fill="#4a8f63"/>
<rect x="688" y="609" width="1" height="5.0" fill="#4a8f63"/>
<rect x="688" y="637.4" width="1" height="4.6" fill="#4a8f63"/>
<rect x="693" y="609" width="1" height="6.0" fill="#4a8f63"/>
<rect x="693" y="636.3" width="1" height="5.7" fill="#4a8f63"/>
<rect x="697" y="609" width="1" height="5.0" fill="#4a8f63"/>
<rect x="697" y="636.8" width="1" height="5.2" fill="#4a8f63"/>
<rect x="701" y="609" width="1" height="7.0" fill="#4a8f63"/>
<rect x="701" y="636.4" width="1" height="5.6" fill="#4a8f63"/>
<rect x="706" y="609" width="1" height="5.0" fill="#4a8f63"/>
<rect x="706" y="637.9" width="1" height="4.1" fill="#4a8f63"/>
<rect x="711" y="609" width="1" height="6.0" fill="#4a8f63"/>
<rect x="711" y="637.0" width="1" height="5.0" fill="#4a8f63"/>
<rect x="720" y="609" width="1" height="8.0" fill="#4a8f63"/>
<rect x="720" y="635.3" width="1" height="6.7" fill="#4a8f63"/>
<rect x="725" y="609" width="1" height="6.0" fill="#4a8f63"/>
<rect x="725" y="637.1" width="1" height="4.9" fill="#4a8f63"/>
<rect x="730" y="609" width="1" height="6.0" fill="#4a8f63"/>
<rect x="730" y="635.4" width="1" height="6.6" fill="#4a8f63"/>
<rect x="734" y="609" width="1" height="5.0" fill="#4a8f63"/>
<rect x="734" y="636.7" width="1" height="5.3" fill="#4a8f63"/>
<rect x="744" y="609" width="1" height="5.0" fill="#4a8f63"/>
<rect x="744" y="637.9" width="1" height="4.1" fill="#4a8f63"/>
<rect x="749" y="609" width="1" height="2.0" fill="#4a8f63"/>
<rect x="749" y="640.1" width="1" height="1.9" fill="#4a8f63"/>
<rect x="759" y="609" width="1" height="2.0" fill="#4a8f63"/>
<rect x="759" y="640.2" width="1" height="1.8" fill="#4a8f63"/>
<rect x="762" y="609" width="1" height="4.0" fill="#4a8f63"/>
<rect x="762" y="638.4" width="1" height="3.6" fill="#4a8f63"/>
<rect x="324" y="641.2" width="1" height="0.8" fill="#4a8f63"/>
<rect x="326" y="640.9" width="1" height="1.1" fill="#4a8f63"/>
<rect x="328" y="640.9" width="1" height="1.1" fill="#4a8f63"/>
<rect x="330" y="641.2" width="1" height="0.8" fill="#4a8f63"/>
<rect x="332" y="641.5" width="1" height="0.5" fill="#4a8f63"/>
<rect x="334" y="641.3" width="1" height="0.7" fill="#4a8f63"/>
<rect x="336" y="641.5" width="1" height="0.5" fill="#4a8f63"/>
<rect x="338" y="641.0" width="1" height="1.0" fill="#4a8f63"/>
<rect x="340" y="640.8" width="1" height="1.2" fill="#4a8f63"/>
<rect x="342" y="641.2" width="1" height="0.8" fill="#4a8f63"/>
<rect x="344" y="641.6" width="1" height="0.4" fill="#4a8f63"/>
<rect x="346" y="641.5" width="1" height="0.5" fill="#4a8f63"/>
<rect x="348" y="641.2" width="1" height="0.8" fill="#4a8f63"/>
<rect x="350" y="640.9" width="1" height="1.1" fill="#4a8f63"/>
<rect x="352" y="640.7" width="1" height="1.3" fill="#4a8f63"/>
<rect x="354" y="641.2" width="1" height="0.8" fill="#4a8f63"/>
<rect x="356" y="640.7" width="1" height="1.3" fill="#4a8f63"/>
<rect x="358" y="640.9" width="1" height="1.1" fill="#4a8f63"/>
<rect x="360" y="641.1" width="1" height="0.9" fill="#4a8f63"/>
<rect x="362" y="641.2" width="1" height="0.8" fill="#4a8f63"/>
<rect x="364" y="641.1" width="1" height="0.9" fill="#4a8f63"/>
<rect x="366" y="640.8" width="1" height="1.2" fill="#4a8f63"/>
<rect x="368" y="641.2" width="1" height="0.8" fill="#4a8f63"/>
<rect x="370" y="640.8" width="1" height="1.2" fill="#4a8f63"/>
<rect x="372" y="641.1" width="1" height="0.9" fill="#4a8f63"/>
<rect x="374" y="641.4" width="1" height="0.6" fill="#4a8f63"/>
<rect x="376" y="641.0" width="1" height="1.0" fill="#4a8f63"/>
<rect x="378" y="640.8" width="1" height="1.2" fill="#4a8f63"/>
<rect x="380" y="641.6" width="1" height="0.4" fill="#4a8f63"/>
<rect x="382" y="641.1" width="1" height="0.9" fill="#4a8f63"/>
<rect x="384" y="641.1" width="1" height="0.9" fill="#4a8f63"/>
<rect x="386" y="640.6" width="1" height="1.4" fill="#4a8f63"/>
<rect x="388" y="640.5" width="1" height="1.5" fill="#4a8f63"/>
<rect x="390" y="641.2" width="1" height="0.8" fill="#4a8f63"/>
<rect x="392" y="640.5" width="1" height="1.5" fill="#4a8f63"/>
<rect x="394" y="640.7" width="1" height="1.3" fill="#4a8f63"/>
<rect x="396" y="641.4" width="1" height="0.6" fill="#4a8f63"/>
<rect x="398" y="641.1" width="1" height="0.9" fill="#4a8f63"/>
<rect x="400" y="641.5" width="1" height="0.5" fill="#4a8f63"/>
<rect x="402" y="640.6" width="1" height="1.4" fill="#4a8f63"/>
<rect x="404" y="640.8" width="1" height="1.2" fill="#4a8f63"/>
<rect x="406" y="640.5" width="1" height="1.5" fill="#4a8f63"/>
<rect x="408" y="640.7" width="1" height="1.3" fill="#4a8f63"/>
<rect x="410" y="640.8" width="1" height="1.2" fill="#4a8f63"/>
<rect x="412" y="640.7" width="1" height="1.3" fill="#4a8f63"/>
<rect x="414" y="641.0" width="1" height="1.0" fill="#4a8f63"/>
<rect x="416" y="641.6" width="1" height="0.4" fill="#4a8f63"/>
<rect x="418" y="640.9" width="1" height="1.1" fill="#4a8f63"/>
<rect x="420" y="641.7" width="1" height="0.3" fill="#4a8f63"/>
<rect x="422" y="641.5" width="1" height="0.5" fill="#4a8f63"/>
<rect x="424" y="640.7" width="1" height="1.3" fill="#4a8f63"/>
<rect x="426" y="641.6" width="1" height="0.4" fill="#4a8f63"/>
<rect x="428" y="641.6" width="1" height="0.4" fill="#4a8f63"/>
<rect x="430" y="641.6" width="1" height="0.4" fill="#4a8f63"/>
<rect x="432" y="640.6" width="1" height="1.4" fill="#4a8f63"/>
<rect x="434" y="641.5" width="1" height="0.5" fill="#4a8f63"/>
<rect x="436" y="641.7" width="1" height="0.3" fill="#4a8f63"/>
<rect x="438" y="640.6" width="1" height="1.4" fill="#4a8f63"/>
<rect x="440" y="641.5" width="1" height="0.5" fill="#4a8f63"/>
<rect x="442" y="640.6" width="1" height="1.4" fill="#4a8f63"/>
<rect x="444" y="640.8" width="1" height="1.2" fill="#4a8f63"/>
<rect x="446" y="640.6" width="1" height="1.4" fill="#4a8f63"/>
<rect x="448" y="640.5" width="1" height="1.5" fill="#4a8f63"/>
<rect x="450" y="640.9" width="1" height="1.1" fill="#4a8f63"/>
<rect x="452" y="640.7" width="1" height="1.3" fill="#4a8f63"/>
<rect x="454" y="641.7" width="1" height="0.3" fill="#4a8f63"/>
<rect x="456" y="640.7" width="1" height="1.3" fill="#4a8f63"/>
<rect x="458" y="641.0" width="1" height="1.0" fill="#4a8f63"/>
<rect x="460" y="640.8" width="1" height="1.2" fill="#4a8f63"/>
<rect x="462" y="641.6" width="1" height="0.4" fill="#4a8f63"/>
<rect x="464" y="640.7" width="1" height="1.3" fill="#4a8f63"/>
<rect x="466" y="640.5" width="1" height="1.5" fill="#4a8f63"/>
<rect x="468" y="641.6" width="1" height="0.4" fill="#4a8f63"/>
<rect x="470" y="641.3" width="1" height="0.7" fill="#4a8f63"/>
<rect x="472" y="641.0" width="1" height="1.0" fill="#4a8f63"/>
<rect x="474" y="640.6" width="1" height="1.4" fill="#4a8f63"/>
<rect x="476" y="641.4" width="1" height="0.6" fill="#4a8f63"/>
<rect x="478" y="641.5" width="1" height="0.5" fill="#4a8f63"/>
<rect x="480" y="641.4" width="1" height="0.6" fill="#4a8f63"/>
<rect x="482" y="640.9" width="1" height="1.1" fill="#4a8f63"/>
<rect x="484" y="640.7" width="1" height="1.3" fill="#4a8f63"/>
<rect x="486" y="641.2" width="1" height="0.8" fill="#4a8f63"/>
<rect x="488" y="641.2" width="1" height="0.8" fill="#4a8f63"/>
<rect x="490" y="641.2" width="1" height="0.8" fill="#4a8f63"/>
<rect x="492" y="641.2" width="1" height="0.8" fill="#4a8f63"/>
<rect x="494" y="641.2" width="1" height="0.8" fill="#4a8f63"/>
<rect x="496" y="641.6" width="1" height="0.4" fill="#4a8f63"/>
<rect x="498" y="641.0" width="1" height="1.0" fill="#4a8f63"/>
<rect x="500" y="640.4" width="1" height="1.6" fill="#4a8f63"/>
<rect x="502" y="641.2" width="1" height="0.8" fill="#4a8f63"/>
<rect x="504" y="640.7" width="1" height="1.3" fill="#4a8f63"/>
<rect x="506" y="641.5" width="1" height="0.5" fill="#4a8f63"/>
<rect x="508" y="640.8" width="1" height="1.2" fill="#4a8f63"/>
<rect x="510" y="640.7" width="1" height="1.3" fill="#4a8f63"/>
<rect x="512" y="640.8" width="1" height="1.2" fill="#4a8f63"/>
<rect x="514" y="641.0" width="1" height="1.0" fill="#4a8f63"/>
<rect x="516" y="641.1" width="1" height="0.9" fill="#4a8f63"/>
<rect x="518" y="640.9" width="1" height="1.1" fill="#4a8f63"/>
<rect x="520" y="640.5" width="1" height="1.5" fill="#4a8f63"/>
<rect x="522" y="641.5" width="1" height="0.5" fill="#4a8f63"/>
<rect x="524" y="641.6" width="1" height="0.4" fill="#4a8f63"/>
<rect x="526" y="640.7" width="1" height="1.3" fill="#4a8f63"/>
<rect x="528" y="640.5" width="1" height="1.5" fill="#4a8f63"/>
<rect x="530" y="641.0" width="1" height="1.0" fill="#4a8f63"/>
<rect x="532" y="641.1" width="1" height="0.9" fill="#4a8f63"/>
<rect x="534" y="640.8" width="1" height="1.2" fill="#4a8f63"/>
<rect x="536" y="641.5" width="1" height="0.5" fill="#4a8f63"/>
<rect x="538" y="641.4" width="1" height="0.6" fill="#4a8f63"/>
<rect x="540" y="641.4" width="1" height="0.6" fill="#4a8f63"/>
<rect x="542" y="640.9" width="1" height="1.1" fill="#4a8f63"/>
<rect x="544" y="641.3" width="1" height="0.7" fill="#4a8f63"/>
<rect x="546" y="641.4" width="1" height="0.6" fill="#4a8f63"/>
<rect x="548" y="640.8" width="1" height="1.2" fill="#4a8f63"/>
<rect x="550" y="640.5" width="1" height="1.5" fill="#4a8f63"/>
<rect x="552" y="641.3" width="1" height="0.7" fill="#4a8f63"/>
<rect x="554" y="640.8" width="1" height="1.2" fill="#4a8f63"/>
<rect x="556" y="641.2" width="1" height="0.8" fill="#4a8f63"/>
<rect x="558" y="640.6" width="1" height="1.4" fill="#4a8f63"/>
<rect x="560" y="640.9" width="1" height="1.1" fill="#4a8f63"/>
<rect x="562" y="641.4" width="1" height="0.6" fill="#4a8f63"/>
<rect x="564" y="641.4" width="1" height="0.6" fill="#4a8f63"/>
<rect x="566" y="641.7" width="1" height="0.3" fill="#4a8f63"/>
<rect x="568" y="641.1" width="1" height="0.9" fill="#4a8f63"/>
<rect x="570" y="641.2" width="1" height="0.8" fill="#4a8f63"/>
<rect x="572" y="641.5" width="1" height="0.5" fill="#4a8f63"/>
<rect x="574" y="641.2" width="1" height="0.8" fill="#4a8f63"/>
<rect x="576" y="641.3" width="1" height="0.7" fill="#4a8f63"/>
<rect x="578" y="640.7" width="1" height="1.3" fill="#4a8f63"/>
<rect x="580" y="641.5" width="1" height="0.5" fill="#4a8f63"/>
<rect x="582" y="640.4" width="1" height="1.6" fill="#4a8f63"/>
<rect x="584" y="641.1" width="1" height="0.9" fill="#4a8f63"/>
<rect x="586" y="640.9" width="1" height="1.1" fill="#4a8f63"/>
<rect x="588" y="641.1" width="1" height="0.9" fill="#4a8f63"/>
<rect x="590" y="640.6" width="1" height="1.4" fill="#4a8f63"/>
<rect x="592" y="640.6" width="1" height="1.4" fill="#4a8f63"/>
<rect x="594" y="641.0" width="1" height="1.0" fill="#4a8f63"/>
<rect x="596" y="641.1" width="1" height="0.9" fill="#4a8f63"/>
<rect x="598" y="640.8" width="1" height="1.2" fill="#4a8f63"/>
<rect x="600" y="640.6" width="1" height="1.4" fill="#4a8f63"/>
<rect x="602" y="641.2" width="1" height="0.8" fill="#4a8f63"/>
<rect x="604" y="640.7" width="1" height="1.3" fill="#4a8f63"/>
<rect x="606" y="640.5" width="1" height="1.5" fill="#4a8f63"/>
<rect x="608" y="641.1" width="1" height="0.9" fill="#4a8f63"/>
<rect x="610" y="641.4" width="1" height="0.6" fill="#4a8f63"/>
<rect x="612" y="641.4" width="1" height="0.6" fill="#4a8f63"/>
<rect x="614" y="640.8" width="1" height="1.2" fill="#4a8f63"/>
<rect x="616" y="640.8" width="1" height="1.2" fill="#4a8f63"/>
<rect x="618" y="640.5" width="1" height="1.5" fill="#4a8f63"/>
<rect x="620" y="640.6" width="1" height="1.4" fill="#4a8f63"/>
<rect x="622" y="641.4" width="1" height="0.6" fill="#4a8f63"/>
<rect x="624" y="641.5" width="1" height="0.5" fill="#4a8f63"/>
<rect x="626" y="641.4" width="1" height="0.6" fill="#4a8f63"/>
<rect x="628" y="641.5" width="1" height="0.5" fill="#4a8f63"/>
<rect x="630" y="640.8" width="1" height="1.2" fill="#4a8f63"/>
<rect x="632" y="640.6" width="1" height="1.4" fill="#4a8f63"/>
<rect x="634" y="640.5" width="1" height="1.5" fill="#4a8f63"/>
<rect x="636" y="641.4" width="1" height="0.6" fill="#4a8f63"/>
<rect x="638" y="640.6" width="1" height="1.4" fill="#4a8f63"/>
<rect x="640" y="641.3" width="1" height="0.7" fill="#4a8f63"/>
<rect x="642" y="641.1" width="1" height="0.9" fill="#4a8f63"/>
<rect x="644" y="640.8" width="1" height="1.2" fill="#4a8f63"/>
<rect x="646" y="641.6" width="1" height="0.4" fill="#4a8f63"/>
<rect x="648" y="641.6" width="1" height="0.4" fill="#4a8f63"/>
<rect x="650" y="640.6" width="1" height="1.4" fill="#4a8f63"/>
<rect x="652" y="641.3" width="1" height="0.7" fill="#4a8f63"/>
<rect x="654" y="641.2" width="1" height="0.8" fill="#4a8f63"/>
<rect x="656" y="640.9" width="1" height="1.1" fill="#4a8f63"/>
<rect x="658" y="640.8" width="1" height="1.2" fill="#4a8f63"/>
<rect x="660" y="641.7" width="1" height="0.3" fill="#4a8f63"/>
<rect x="662" y="641.3" width="1" height="0.7" fill="#4a8f63"/>
<rect x="664" y="641.1" width="1" height="0.9" fill="#4a8f63"/>
<rect x="666" y="641.1" width="1" height="0.9" fill="#4a8f63"/>
<rect x="668" y="641.4" width="1" height="0.6" fill="#4a8f63"/>
<rect x="670" y="640.9" width="1" height="1.1" fill="#4a8f63"/>
<rect x="672" y="640.5" width="1" height="1.5" fill="#4a8f63"/>
<rect x="674" y="641.2" width="1" height="0.8" fill="#4a8f63"/>
<rect x="676" y="641.0" width="1" height="1.0" fill="#4a8f63"/>
<rect x="678" y="641.5" width="1" height="0.5" fill="#4a8f63"/>
<rect x="680" y="641.3" width="1" height="0.7" fill="#4a8f63"/>
<rect x="682" y="640.8" width="1" height="1.2" fill="#4a8f63"/>
<rect x="684" y="641.6" width="1" height="0.4" fill="#4a8f63"/>
<rect x="686" y="640.5" width="1" height="1.5" fill="#4a8f63"/>
<rect x="688" y="640.5" width="1" height="1.5" fill="#4a8f63"/>
<rect x="690" y="641.6" width="1" height="0.4" fill="#4a8f63"/>
<rect x="692" y="640.5" width="1" height="1.5" fill="#4a8f63"/>
<rect x="694" y="641.2" width="1" height="0.8" fill="#4a8f63"/>
<rect x="696" y="640.7" width="1" height="1.3" fill="#4a8f63"/>
<rect x="698" y="640.7" width="1" height="1.3" fill="#4a8f63"/>
<rect x="700" y="641.3" width="1" height="0.7" fill="#4a8f63"/>
<rect x="702" y="640.8" width="1" height="1.2" fill="#4a8f63"/>
<rect x="704" y="640.8" width="1" height="1.2" fill="#4a8f63"/>
<rect x="706" y="640.7" width="1" height="1.3" fill="#4a8f63"/>
<rect x="708" y="641.4" width="1" height="0.6" fill="#4a8f63"/>
<rect x="710" y="640.7" width="1" height="1.3" fill="#4a8f63"/>
<rect x="712" y="640.5" width="1" height="1.5" fill="#4a8f63"/>
<rect x="714" y="640.8" width="1" height="1.2" fill="#4a8f63"/>
<rect x="716" y="641.0" width="1" height="1.0" fill="#4a8f63"/>
<rect x="718" y="641.6" width="1" height="0.4" fill="#4a8f63"/>
<rect x="720" y="641.1" width="1" height="0.9" fill="#4a8f63"/>
<rect x="722" y="641.2" width="1" height="0.8" fill="#4a8f63"/>
<rect x="724" y="640.8" width="1" height="1.2" fill="#4a8f63"/>
<rect x="726" y="640.8" width="1" height="1.2" fill="#4a8f63"/>
<rect x="728" y="641.0" width="1" height="1.0" fill="#4a8f63"/>
<rect x="730" y="641.5" width="1" height="0.5" fill="#4a8f63"/>
<rect x="732" y="640.9" width="1" height="1.1" fill="#4a8f63"/>
<rect x="734" y="640.9" width="1" height="1.1" fill="#4a8f63"/>
<rect x="736" y="641.5" width="1" height="0.5" fill="#4a8f63"/>
<rect x="738" y="640.5" width="1" height="1.5" fill="#4a8f63"/>
<rect x="740" y="640.8" width="1" height="1.2" fill="#4a8f63"/>
<rect x="742" y="641.5" width="1" height="0.5" fill="#4a8f63"/>
<rect x="744" y="640.5" width="1" height="1.5" fill="#4a8f63"/>
<rect x="746" y="641.5" width="1" height="0.5" fill="#4a8f63"/>
<rect x="748" y="641.3" width="1" height="0.7" fill="#4a8f63"/>
<rect x="750" y="640.8" width="1" height="1.2" fill="#4a8f63"/>
<rect x="752" y="640.9" width="1" height="1.1" fill="#4a8f63"/>
<rect x="754" y="641.0" width="1" height="1.0" fill="#4a8f63"/>
<rect x="756" y="640.9" width="1" height="1.1" fill="#4a8f63"/>
<rect x="758" y="641.1" width="1" height="0.9" fill="#4a8f63"/>
<rect x="760" y="641.3" width="1" height="0.7" fill="#4a8f63"/>
<rect x="762" y="641.5" width="1" height="0.5" fill="#4a8f63"/>
<rect x="764" y="641.6" width="1" height="0.4" fill="#4a8f63"/>
</svg>
<!-- playhead -->
<div class="a" style="left:1092px;top:396px;width:5px;height:372px;background:#141416;opacity:.7"></div>
<div class="a" style="left:1093px;top:404px;width:3px;height:364px;background:linear-gradient(to right,#7a3530 0,#7a3530 1px,#e64a3a 1px,#e64a3a 2px,#7a3530 2px)"></div>


<!-- left panel details -->
<div class="a" style="left:0;top:326px;width:91px;height:1px;background:#0b0b0c"></div>
<div class="a" style="left:0;top:327px;width:91px;height:23px;background:#242428"></div>
<div class="a" style="left:54px;top:327px;width:1px;height:23px;background:#0b0b0c"></div>
<div class="a" style="left:0;top:350px;width:91px;height:1px;background:#0b0b0c"></div>
<div class="a" style="left:0;top:380px;width:71px;height:1px;background:#3c3c40"></div>
<div class="a" style="left:-10px;top:390px;width:78px;height:31px;background:#252429;border:1px solid #0e0e10;border-radius:4px"></div>
<div class="a" style="left:-10px;top:426px;width:79px;height:33px;background:#252429;border:2px solid #e0563f;border-radius:5px"></div>
<div class="a" style="left:-10px;top:428px;width:77px;height:29px;border:1px solid #111;border-radius:4px"></div>
<div class="a" style="left:-10px;top:464px;width:78px;height:31px;background:#252429;border:1px solid #0e0e10;border-radius:4px"></div>
<!-- icons svg -->
<svg class="a" style="left:0;top:0" width="1542" height="773" fill="none" stroke-linecap="round" stroke-linejoin="round">
 <!-- search -->
 <circle cx="35.6" cy="337.2" r="5.1" stroke="#8c8c8c" stroke-width="1.6"/>
 <path d="M39.6 341.2 L43.3 344.9" stroke="#8c8c8c" stroke-width="2"/>
 <circle cx="66" cy="338" r="2" fill="#8c8c8c"/>
 <circle cx="73" cy="338" r="2" fill="#8c8c8c"/>
 <circle cx="80" cy="338" r="2" fill="#8c8c8c"/>
 <path d="M61.5 369.5 L65.5 365 L69.5 369.5" stroke="#7a7a7a" stroke-width="1.4"/>
 <!-- crop frame -->
 <rect x="117.4" y="320.4" width="14.1" height="10.1" stroke="#8a8a8a" stroke-width="1.1"/>
 <g fill="#8a8a8a" stroke="none">
  <rect x="115.9" y="318.9" width="3" height="3"/><rect x="130" y="318.9" width="3" height="3"/>
  <rect x="115.9" y="329" width="3" height="3"/><rect x="130" y="329" width="3" height="3"/>
 </g>
 <g fill="#222226" stroke="none">
  <rect x="116.9" y="319.9" width="1" height="1"/><rect x="131" y="319.9" width="1" height="1"/>
  <rect x="116.9" y="330" width="1" height="1"/><rect x="131" y="330" width="1" height="1"/>
 </g>
 <path d="M144.1 323.3 L148.5 328.2 L152.9 323.3" stroke="#8a8a8a" stroke-width="1.5"/>
 <!-- nav -->
 <path d="M260.5 322.3 L255.6 326.5 L260.5 330.7" stroke="#8a8a8a" stroke-width="1.5"/>
 <path d="M288.3 322.3 L293.2 326.5 L288.3 330.7" stroke="#8a8a8a" stroke-width="1.5"/>
 <circle cx="274.5" cy="326.4" r="4.5" fill="#8c8c8c" stroke="none"/>
 <!-- transport -->
 <g fill="#8a8a8a" stroke="none">
  <rect x="787" y="319" width="2" height="13"/>
  <path d="M789 325.5 L798 319 L798 332 Z"/>
  <path d="M798 325.5 L807 319 L807 332 Z"/>
  <path d="M824.7 325.5 L835.1 319 L835.1 332 Z"/>
  <rect x="855" y="319" width="13.2" height="13"/>
  <path d="M898.2 325.5 L887.9 319 L887.9 332 Z"/>
  <path d="M925 325.5 L916 319 L916 332 Z"/>
  <path d="M934 325.5 L925 319 L925 332 Z"/>
  <rect x="934" y="319" width="2" height="13"/>
 </g>
 <path d="M966 321 L961 321 A5 5 0 0 0 961 331 L969 331 A5 5 0 0 0 970.5 321.3" stroke="#8a8a8a" stroke-width="1.9" stroke-linecap="butt"/>
 <path d="M962.3 317.2 L966.5 321.3 L962.3 325.5" stroke="#8a8a8a" stroke-width="1.6"/>
 <!-- timeline layout -->
 <g stroke="none">
  <rect x="110.2" y="361.1" width="24.6" height="9.6" rx="1" fill="#8a8a8a"/>
  <rect x="111.2" y="362.2" width="6.5" height="4.5" fill="#2a2a2e"/>
  <rect x="119.1" y="362.2" width="6.7" height="4.5" fill="#2a2a2e"/>
  <rect x="127.2" y="362.2" width="6.7" height="4.5" fill="#2a2a2e"/>
  <rect x="111.2" y="368" width="6.7" height="1" fill="#1a1a1c"/>
  <rect x="110.2" y="372.1" width="24.6" height="3.6" rx="1" fill="#6c6c6c"/>
  <rect x="111.2" y="373.2" width="6.7" height="1" fill="#1a1a1c"/>
 </g>
 <!-- select arrow -->
 <path d="M727.7 359.7 L727.7 374.5 L731.5 372.2 L734.7 377.2 L737 375.8 L734.3 370.6 L738.6 369.5 Z" fill="#e84b3c" stroke="none"/>
 <!-- trim -->
 <path d="M767.8 362.2 L759.7 362.2 L759.7 375.6 L767.8 375.6 M778 362.2 L786.2 362.2 L786.2 375.6 L778 375.6" stroke="#5c5c5c" stroke-width="1.3" stroke-linecap="butt" stroke-linejoin="miter"/>
 <rect x="769.9" y="359.9" width="6.4" height="17.4" rx="2.8" stroke="#8a8a8a" stroke-width="1.4"/>
 <rect x="772" y="364.3" width="1.8" height="8.4" fill="#7a7a7a" stroke="none"/>
 <path d="M766.5 365.8 L763.2 369 L766.5 372 M779.4 365.8 L782.7 369 L779.4 372" stroke="#8a8a8a" stroke-width="1.2"/>
 <!-- dynamic trim -->
 <path d="M804.9 362.3 Q801.8 362.3 801.8 366 L801.8 371.8 Q801.8 375.5 804.9 375.5 M822.4 362.3 Q825.5 362.3 825.5 366 L825.5 371.8 Q825.5 375.5 822.4 375.5" stroke="#5c5c5c" stroke-width="1.4"/>
 <path d="M809.9 365.4 L806 368.9 L809.9 372.5 M817.1 365.4 L821 368.9 L817.1 372.5" stroke="#8a8a8a" stroke-width="1.3"/>
 <rect x="812.8" y="360" width="1.4" height="17" fill="#8a8a8a" stroke="none"/>
 <path d="M810.9 358 L816 358 L813.5 361 Z" fill="#8a8a8a" stroke="none"/>
 <!-- blade -->
 <g fill="#8a8a8a" stroke="none">
  <rect x="843" y="362" width="20" height="2" rx="1"/>
  <rect x="843" y="374" width="20" height="2" rx="1"/>
  <rect x="841.8" y="365" width="22.3" height="7.9"/>
 </g>
 <g fill="#1e1e20" stroke="none">
  <rect x="843" y="368.3" width="20" height="1.2"/>
  <path d="M847.4 365.8 Q849.6 368.9 847.4 372 Q845.2 368.9 847.4 365.8 Z"/>
  <path d="M853 365.8 Q855.2 368.9 853 372 Q850.8 368.9 853 365.8 Z"/>
  <path d="M858.5 365.8 Q860.7 368.9 858.5 372 Q856.3 368.9 858.5 365.8 Z"/>
  <path d="M844.1 366.6 Q845.8 368.9 844.1 371.2 Q842.4 368.9 844.1 366.6 Z"/>
  <path d="M850.2 366.6 Q851.9 368.9 850.2 371.2 Q848.5 368.9 850.2 366.6 Z"/>
  <path d="M855.8 366.6 Q857.5 368.9 855.8 371.2 Q854.1 368.9 855.8 366.6 Z"/>
  <path d="M861.6 366.6 Q863.3 368.9 861.6 371.2 Q859.9 368.9 861.6 366.6 Z"/>
 </g>
 <!-- separators -->
 <g fill="#444448" stroke="none">
  <rect x="878" y="354" width="1" height="30"/>
  <rect x="1009" y="354" width="1" height="30"/>
  <rect x="1140" y="354" width="1" height="30"/>
  <rect x="1239" y="354" width="1" height="30"/>
 </g>
 <!-- insert -->
 <rect x="897.9" y="360.8" width="12.4" height="10.4" rx="1.6" fill="#2c2c30" stroke="#8c8c8c" stroke-width="1.4"/>
 <rect x="890.9" y="365.8" width="4.5" height="10.5" rx="1" stroke="#5c5c5c" stroke-width="1.2"/>
 <rect x="912.8" y="365.8" width="4.5" height="10.5" rx="1" stroke="#5c5c5c" stroke-width="1.2"/>
 <path d="M900.3 374.6 L904 377.6 L907.7 374.6" stroke="#8a8a8a" stroke-width="1.2"/>
 <!-- overwrite -->
 <path d="M947.8 366.6 L953.2 366.6 L953.2 377.2 L940.8 377.2 L940.8 372.6" stroke="#5c5c5c" stroke-width="1.2"/>
 <rect x="933.7" y="360.8" width="12.6" height="10.6" rx="1.6" fill="#2c2c30" stroke="#8c8c8c" stroke-width="1.4"/>
 <path d="M948.2 357.6 Q952.6 357.6 952.6 363.2" stroke="#8a8a8a" stroke-width="1.2"/>
 <path d="M950.1 361.3 L952.6 363.9 L955.1 361.3" stroke="#8a8a8a" stroke-width="1.2"/>
 <!-- replace -->
 <path d="M984.6 364 L997.2 364 L997.2 374.2 L984.6 374.2" stroke="#5c5c5c" stroke-width="1.3"/>
 <path d="M973.8 374.2 L970.7 374.2 L970.7 364 L983.2 364 L983.2 374.2 L981.8 374.2" stroke="#8c8c8c" stroke-width="1.4"/>
 <path d="M976.4 367.5 L976.4 374.5 Q976.4 377.8 979.7 377.8 Q983 377.8 983.4 375.8" stroke="#8a8a8a" stroke-width="1.2"/>
 <path d="M973.6 370.2 L976.4 367.3 L979.2 370.2" stroke="#8a8a8a" stroke-width="1.2"/>
 <path d="M984.6 361.2 Q985.4 358.6 988 358.6 Q991.2 358.6 991.2 362 L991.2 371" stroke="#8a8a8a" stroke-width="1.2"/>
 <path d="M988.3 368.3 L991.2 371.2 L994.1 368.3" stroke="#8a8a8a" stroke-width="1.2"/>
 <!-- magnet -->
 <g transform="translate(1034.3 370.5) rotate(45)" >
  <path d="M-5.2 -4.6 L-5.2 0 A5.2 5.2 0 0 0 5.2 0 L5.2 -4.6" stroke="#ffffff" stroke-width="2.4" stroke-linecap="butt"/>
  <rect x="-6.4" y="-8.2" width="2.4" height="2.4" fill="#fff" stroke="none"/>
  <rect x="4" y="-8.2" width="2.4" height="2.4" fill="#fff" stroke="none"/>
 </g>
 <!-- link -->
 <g transform="translate(1075.2 368.8) rotate(-45)" stroke="#fff" stroke-width="2.2">
  <path d="M0.5 -3.9 L5.9 -3.9 A2.9 2.9 0 0 1 5.9 1.9 L-3.2 1.9"/>
  <path d="M-0.5 3.9 L-5.9 3.9 A2.9 2.9 0 0 1 -5.9 -1.9 L3.2 -1.9"/>
 </g>
 <!-- position lock -->
 <path d="M1110.3 366 L1110.3 362.8 Q1110.3 360.4 1112.7 360.4 L1116.9 360.4 Q1119.3 360.4 1119.3 362.8 L1119.3 366" stroke="#7a7a7a" stroke-width="1.6"/>
 <rect x="1106.9" y="365.9" width="15.1" height="11.2" rx="1.8" fill="#7a7a7a" stroke="none"/>
 <path d="M1109.3 371.5 L1119.7 371.5 M1111.7 369 L1109.1 371.5 L1111.7 374 M1117.3 369 L1119.9 371.5 L1117.3 374" stroke="#1e1e20" stroke-width="1.4"/>
 <!-- flag -->
 <path d="M1154.6 362.7 L1165.3 362.7 L1165.3 375 L1160 372.1 L1154.6 375 Z" fill="#0a84e8" stroke="#0c0c0c" stroke-width="1" stroke-linejoin="miter"/>
 <path d="M1175 366.8 L1179.5 371.3 L1184 366.8" stroke="#8a8a8a" stroke-width="1.4"/>
 <path d="M1198.7 364.7 Q1198.7 362.7 1200.7 362.7 L1207.3 362.7 Q1209.3 362.7 1209.3 364.7 L1209.3 372.1 L1204 374.9 L1198.7 372.1 Z" fill="#0a80e2" stroke="#0c0c0c" stroke-width="1"/>
 <path d="M1219 366.8 L1223.5 371.3 L1228 366.8" stroke="#8a8a8a" stroke-width="1.4"/>
 <!-- zoom icons -->
 <rect x="1251.9" y="360.8" width="23.2" height="11.2" rx="1.5" fill="#2a2a2e" stroke="#6a6a6a" stroke-width="1.2"/>
 <path d="M1254.5 362 V366 M1257.5 362 V364.5 M1260.5 362 V366 M1263.5 362 V364.5 M1266.5 362 V366 M1269.5 362 V364.5 M1272.5 362 V366" stroke="#555" stroke-width="1" stroke-linecap="butt"/>
 <circle cx="1271.3" cy="370.3" r="4.4" fill="#38383c" stroke="#7c7c7c" stroke-width="1.8"/>
 <path d="M1274.8 373.8 L1277.6 376.6" stroke="#7c7c7c" stroke-width="2.3"/>

 <path d="M1291 360.6 L1317.6 360.6" stroke="#3c3c40" stroke-width="1" stroke-linecap="butt"/>
 <path d="M1291 372.2 L1300.5 372.2" stroke="#3c3c40" stroke-width="1.6" stroke-linecap="butt"/>
 <path d="M1292.6 361.5 V365 M1295.3 361.5 V367 M1298.5 361.5 V365 M1310 361.5 V365 M1313 361.5 V365 M1316 361.5 V365" stroke="#555" stroke-width="1" stroke-linecap="butt"/>
 <rect x="1301.6" y="360.6" width="6" height="11.8" rx="1.4" stroke="#6e6e6e" stroke-width="1.2"/>
 <path d="M1304.6 362.5 V368" stroke="#555" stroke-width="1"/>
 <circle cx="1311.4" cy="370.3" r="4.4" fill="#38383c" stroke="#7c7c7c" stroke-width="1.8"/>
 <path d="M1314.9 373.8 L1317.7 376.6" stroke="#7c7c7c" stroke-width="2.3"/>

 <path d="M1331.2 360.6 L1358 360.6" stroke="#58585c" stroke-width="1.4" stroke-linecap="butt"/>
 <path d="M1331.2 372.2 L1346 372.2" stroke="#444448" stroke-width="1.8" stroke-linecap="butt"/>
 <path d="M1332.5 361.5 V365 M1335.5 361.5 V366.8 M1338.5 361.5 V365 M1341.5 361.5 V365 M1344.5 361.5 V366.8 M1347.5 361.5 V365 M1350.5 361.5 V366.8 M1353.5 361.5 V365 M1356.5 361.5 V365" stroke="#a0a0a0" stroke-width="1" stroke-linecap="butt"/>
 <circle cx="1351.4" cy="370.3" r="4.4" fill="#3c3c40" stroke="#ffffff" stroke-width="2"/>
 <path d="M1354.9 373.8 L1357.9 376.8" stroke="#ffffff" stroke-width="2.5"/>
 <!-- zoom slider -->
 <circle cx="1381.4" cy="368.8" r="6.5" fill="#29292d" stroke="none"/>
 <path d="M1378 368.8 L1385 368.8" stroke="#7a7a7a" stroke-width="1.8" stroke-linecap="butt"/>
 <rect x="1400.8" y="366.8" width="86" height="3.4" rx="1.7" fill="#161618" stroke="none"/>
 <circle cx="1436.5" cy="368.5" r="4.7" fill="#9a9a9a" stroke="none"/>
 <circle cx="1506.9" cy="368.8" r="6.5" fill="#29292d" stroke="none"/>
 <path d="M1503 368.8 L1510.8 368.8 M1506.9 364.9 L1506.9 372.7" stroke="#8a8a8a" stroke-width="1.7" stroke-linecap="butt"/>

 <!-- track header icons -->
 <path d="M131.5 474.5 L131.5 471.5 Q131.5 469.5 133.5 469.5 L136.5 469.5 Q138.5 469.5 138.5 471.5 L138.5 472.5" stroke="#6e6e6e" stroke-width="1.2" stroke-linecap="butt"/><rect x="129.5" y="474.5" width="11" height="7" rx="1.5" stroke="#6e6e6e" stroke-width="1.2"/>
<rect x="157.5" y="469.5" width="16" height="12" fill="#18181a" stroke="#ffffff" stroke-width="1.4" stroke-linejoin="miter"/><path d="M163 472.6 L160.4 475.5 L163 478.4 M167.3 472.6 L169.9 475.5 L167.3 478.4" stroke="#f0f0f0" stroke-width="1.3" stroke-linecap="butt" stroke-linejoin="miter"/>
<rect x="189.5" y="470.5" width="16" height="11" stroke="#ffffff" stroke-width="1.3" stroke-linejoin="miter"/><rect x="191" y="472" width="1" height="1" fill="#e0e0e0" stroke="none"/><rect x="203" y="472" width="1" height="1" fill="#e0e0e0" stroke="none"/><rect x="191" y="475" width="1" height="1" fill="#e0e0e0" stroke="none"/><rect x="203" y="475" width="1" height="1" fill="#e0e0e0" stroke="none"/><rect x="191" y="478" width="1" height="1" fill="#e0e0e0" stroke="none"/><rect x="203" y="478" width="1" height="1" fill="#e0e0e0" stroke="none"/>
<path d="M131.5 559.5 L131.5 556.5 Q131.5 554.5 133.5 554.5 L136.5 554.5 Q138.5 554.5 138.5 556.5 L138.5 557.5" stroke="#6e6e6e" stroke-width="1.2" stroke-linecap="butt"/><rect x="129.5" y="559.5" width="11" height="7" rx="1.5" stroke="#6e6e6e" stroke-width="1.2"/>
<rect x="157.5" y="554.5" width="16" height="12" fill="#18181a" stroke="#ffffff" stroke-width="1.4" stroke-linejoin="miter"/><path d="M163 557.6 L160.4 560.5 L163 563.4 M167.3 557.6 L169.9 560.5 L167.3 563.4" stroke="#f0f0f0" stroke-width="1.3" stroke-linecap="butt" stroke-linejoin="miter"/>
<rect x="189.5" y="555.5" width="16" height="11" stroke="#ffffff" stroke-width="1.3" stroke-linejoin="miter"/><rect x="191" y="557" width="1" height="1" fill="#e0e0e0" stroke="none"/><rect x="203" y="557" width="1" height="1" fill="#e0e0e0" stroke="none"/><rect x="191" y="560" width="1" height="1" fill="#e0e0e0" stroke="none"/><rect x="203" y="560" width="1" height="1" fill="#e0e0e0" stroke="none"/><rect x="191" y="563" width="1" height="1" fill="#e0e0e0" stroke="none"/><rect x="203" y="563" width="1" height="1" fill="#e0e0e0" stroke="none"/>
<path d="M131.5 650.5 L131.5 647.5 Q131.5 645.5 133.5 645.5 L136.5 645.5 Q138.5 645.5 138.5 647.5 L138.5 648.5" stroke="#6e6e6e" stroke-width="1.2" stroke-linecap="butt"/><rect x="129.5" y="650.5" width="11" height="7" rx="1.5" stroke="#6e6e6e" stroke-width="1.2"/>
<rect x="157.5" y="645.5" width="16" height="12" fill="#18181a" stroke="#ffffff" stroke-width="1.4" stroke-linejoin="miter"/><path d="M163 648.6 L160.4 651.5 L163 654.4 M167.3 648.6 L169.9 651.5 L167.3 654.4" stroke="#f0f0f0" stroke-width="1.3" stroke-linecap="butt" stroke-linejoin="miter"/>
<rect x="187.9" y="641.8" width="18.4" height="18.6" rx="2" stroke="#6a6a6a" stroke-width="1.3"/>
<rect x="218.8" y="641.8" width="18.4" height="18.6" rx="2" stroke="#6a6a6a" stroke-width="1.3"/>
<text x="197.1" y="655" font-size="11.5" fill="#8c8c8c" stroke="none" text-anchor="middle" font-family="Liberation Sans">S</text>
<text x="228" y="655" font-size="11.5" fill="#8c8c8c" stroke="none" text-anchor="middle" font-family="Liberation Sans">M</text>
 <!-- playhead head -->
 <path d="M1088.5 395.2 L1100.5 395.2 Q1102 395.2 1102 396.7 L1102 401.3 L1094.5 407.5 L1087 401.3 L1087 396.7 Q1087 395.2 1088.5 395.2 Z" fill="#e84c3d" stroke="#121214" stroke-width="1"/>
</svg>
</body></html>
